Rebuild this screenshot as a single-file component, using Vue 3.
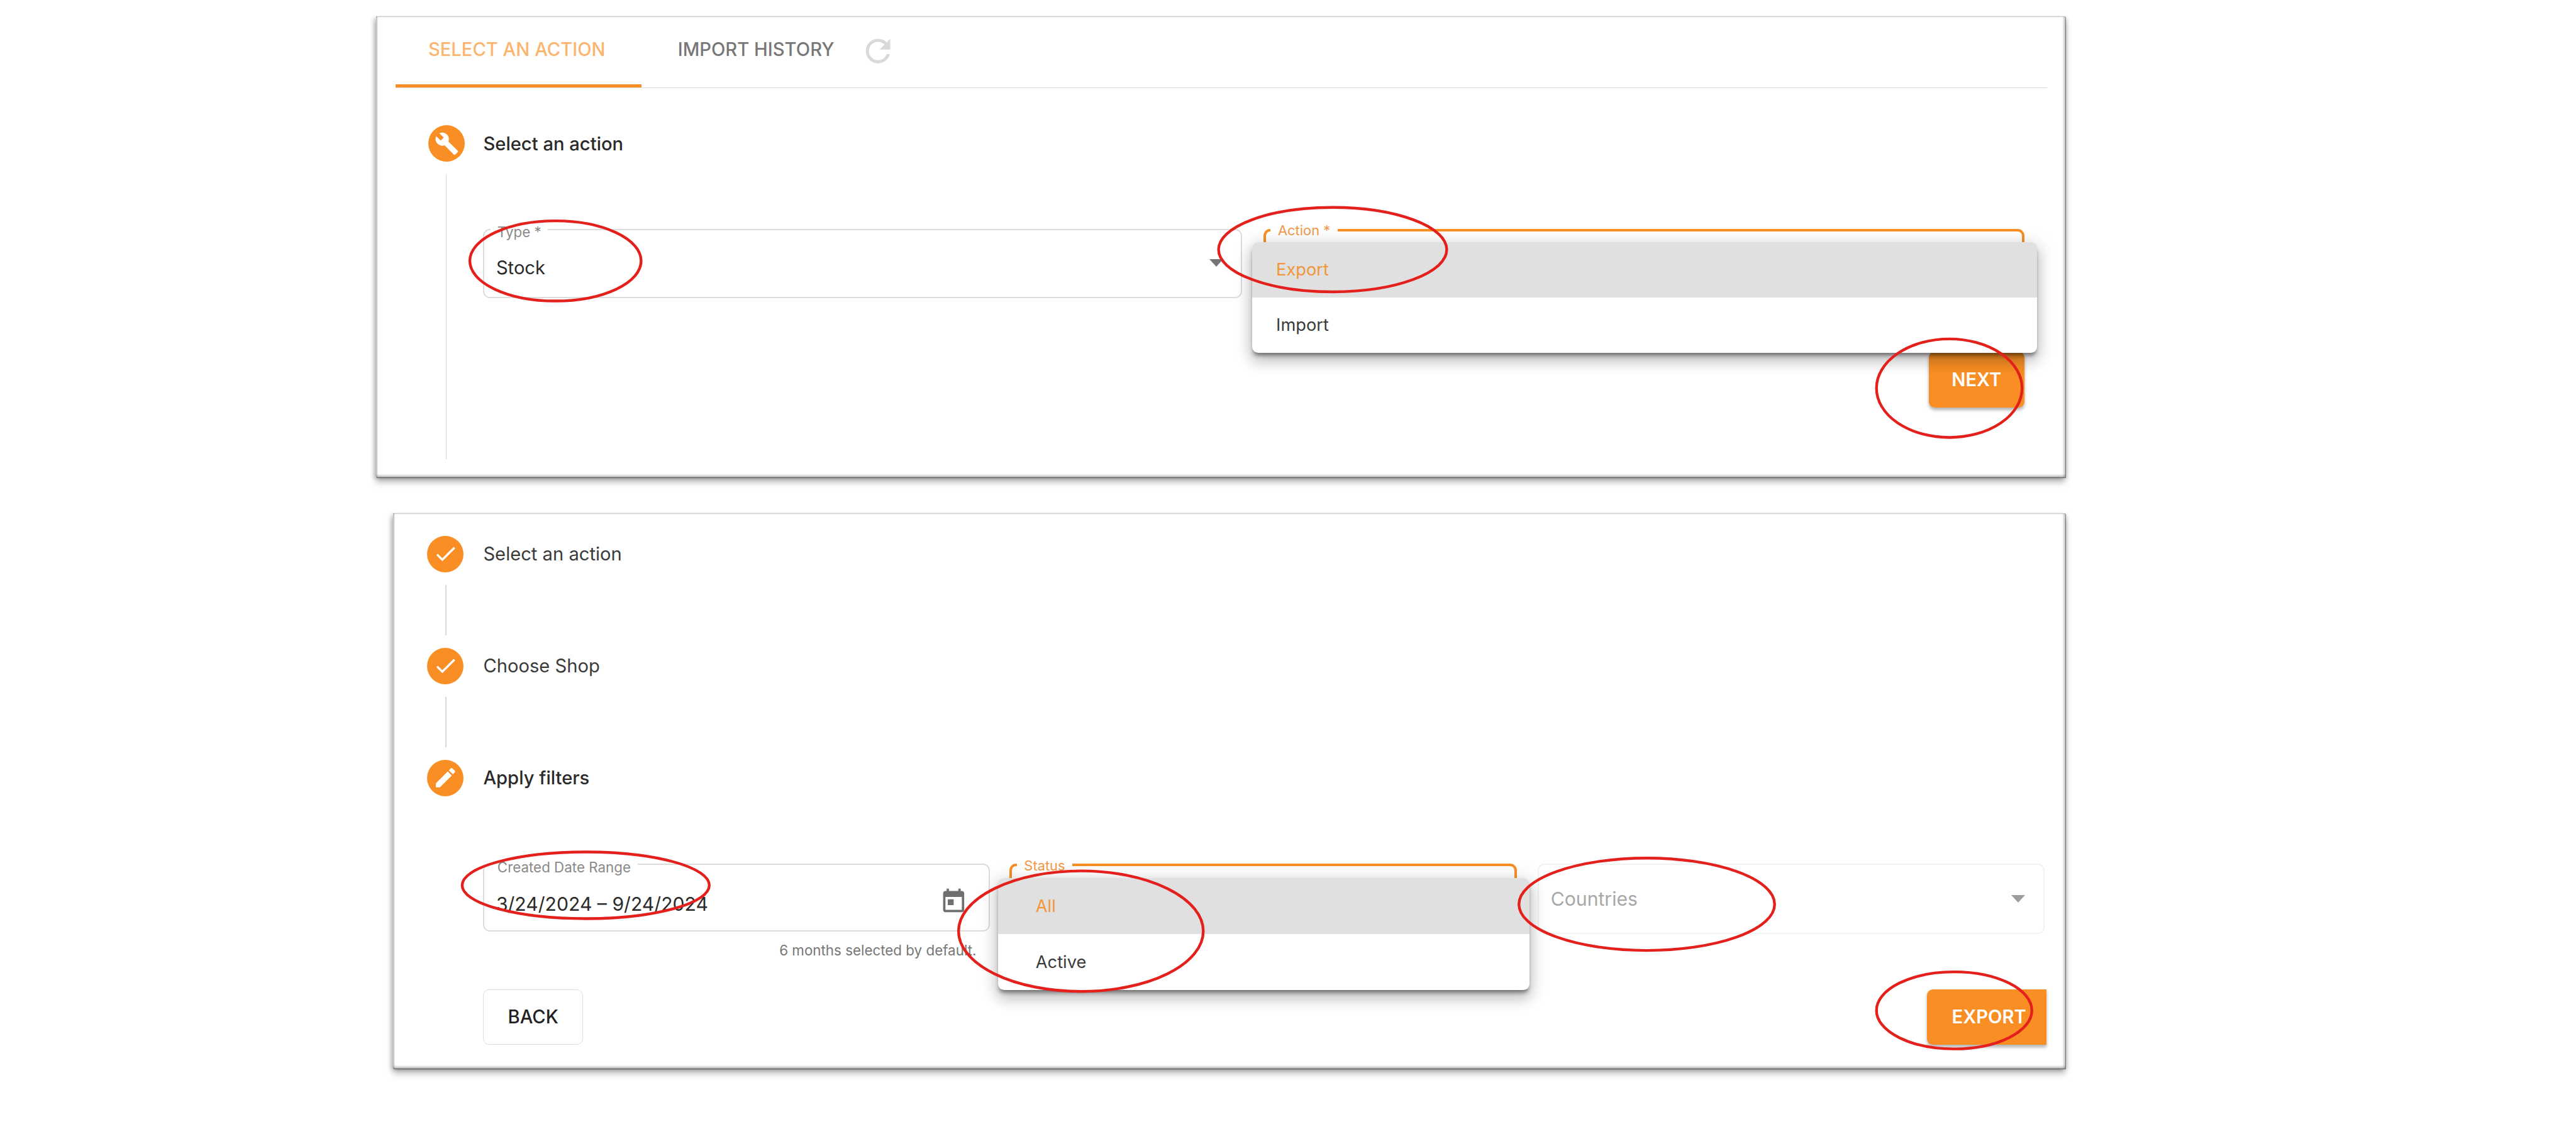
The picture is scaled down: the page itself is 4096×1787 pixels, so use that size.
<script setup>
const ellipses = [
  { cx: 908, cy: 426.5, rx: 140, ry: 65.5 },
  { cx: 2178.5, cy: 408, rx: 186.5, ry: 69 },
  { cx: 3186.5, cy: 634.5, rx: 119, ry: 80.5 },
  { cx: 957.5, cy: 1447, rx: 202, ry: 54.5 },
  { cx: 1767, cy: 1522, rx: 200, ry: 98.5 },
  { cx: 2692, cy: 1478, rx: 209, ry: 75.5 },
  { cx: 3194.5, cy: 1651.5, rx: 127, ry: 63 }
]
</script>

<template>
  <div class="page">
    <section class="card card-one">
      <nav class="tabs">
        <span class="tab active">SELECT AN ACTION</span>
        <span class="tab">IMPORT HISTORY</span>
        <svg class="refresh" viewBox="0 0 24 24"><path d="M17.65 6.35C16.2 4.9 14.21 4 12 4c-4.42 0-7.99 3.58-7.99 8s3.57 8 7.99 8c3.73 0 6.84-2.55 7.73-6h-2.08c-.82 2.33-3.04 4-5.65 4-3.31 0-6-2.69-6-6s2.69-6 6-6c1.66 0 3.14.69 4.22 1.78L13 11h7V4l-2.35 2.35z" /></svg>
      </nav>

      <div class="step-head first-head">
        <span class="dot">
          <svg class="wrench" viewBox="0 0 24 24"><path d="M22.7 19l-9.1-9.1c.9-2.3.4-5-1.5-6.9-2-2-5-2.4-7.4-1.3L9 6 6 9 1.6 4.7C.4 7.1.9 10.1 2.9 12.1c1.9 1.9 4.6 2.4 6.9 1.5l9.1 9.1c.4.4 1 .4 1.4 0l2.3-2.3c.5-.4.5-1.1.1-1.4z" /></svg>
        </span>
        <span class="step-label strong">Select an action</span>
      </div>

      <div class="step-body one-body">
        <div class="field-row">
          <div class="field">
            <span class="float-label">Type *</span>
            <span class="value stock">Stock</span>
            <span class="arrow"></span>
          </div>
          <div class="field focused">
            <span class="float-label">Action *</span>
            <ul class="menu">
              <li class="selected">Export</li>
              <li>Import</li>
            </ul>
          </div>
        </div>
        <div class="actions end">
          <button class="btn primary next">NEXT</button>
        </div>
      </div>
    </section>

    <section class="card card-two">
      <div class="step-head">
        <span class="dot">
          <svg viewBox="0 0 24 24"><path d="M9 16.2 4.8 12l-1.4 1.4L9 19 21 7l-1.4-1.4z" /></svg>
        </span>
        <span class="step-label">Select an action</span>
      </div>
      <div class="connector"></div>
      <div class="step-head">
        <span class="dot">
          <svg viewBox="0 0 24 24"><path d="M9 16.2 4.8 12l-1.4 1.4L9 19 21 7l-1.4-1.4z" /></svg>
        </span>
        <span class="step-label">Choose Shop</span>
      </div>
      <div class="connector"></div>
      <div class="step-head">
        <span class="dot">
          <svg viewBox="0 0 24 24"><path d="M3 17.25V21h3.75L17.81 9.94l-3.75-3.75L3 17.25zM20.71 7.04a.996.996 0 0 0 0-1.41l-2.34-2.34a.996.996 0 0 0-1.41 0l-1.83 1.83 3.75 3.75 1.83-1.83z" /></svg>
        </span>
        <span class="step-label strong">Apply filters</span>
      </div>

      <div class="filters">
        <div class="filter-date">
          <div class="field date">
            <span class="float-label">Created Date Range</span>
            <span class="value">3/24/2024 – 9/24/2024</span>
            <svg class="calendar" viewBox="0 0 24 24"><path d="M19 3h-1V1h-2v2H8V1H6v2H5c-1.11 0-1.99.9-1.99 2L3 19c0 1.1.89 2 2 2h14c1.1 0 2-.9 2-2V5c0-1.1-.9-2-2-2zm0 16H5V8h14v11zM7 10h5v5H7z" /></svg>
          </div>
          <p class="helper">6 months selected by default.</p>
        </div>
        <div class="field focused status">
          <span class="float-label">Status</span>
          <ul class="menu">
            <li class="selected">All</li>
            <li>Active</li>
          </ul>
        </div>
        <div class="field countries">
          <span class="value placeholder">Countries</span>
          <span class="arrow"></span>
        </div>
      </div>

      <div class="actions between">
        <button class="btn back">BACK</button>
        <button class="btn primary export">EXPORT</button>
      </div>
    </section>

    <svg class="marks" viewBox="0 0 4211 1837">
      <ellipse v-for="(e, i) in ellipses" :key="i" :cx="e.cx" :cy="e.cy" :rx="e.rx" :ry="e.ry" />
    </svg>
  </div>
</template>

<style>
html, body { margin: 0; background: #fff; }
</style>

<style scoped>
.page {
  zoom: 0.97269;
  position: relative;
  width: 4211px;
  height: 1837px;
  box-sizing: border-box;
  padding: 27px 835px 0 0;
  display: flex;
  flex-direction: column;
  align-items: flex-end;
  gap: 59px;
  background: #fff;
  overflow: hidden;
  font-family: Inter, "Liberation Sans", sans-serif;
  color: #2b2b2b;
}

.card {
  box-sizing: border-box;
  background: #fff;
  box-shadow:
    inset 0 -5px 4px -2px rgba(0, 0, 0, .26),
    inset 2px 0 2px rgba(0, 0, 0, .24),
    inset -3px 0 3px rgba(0, 0, 0, .2),
    inset 0 1px 1px rgba(0, 0, 0, .1),
    1px 1px 0 rgba(0, 0, 0, .42),
    0 8px 10px rgba(0, 0, 0, .26),
    -4px 2px 6px rgba(0, 0, 0, .16),
    3px 2px 5px rgba(0, 0, 0, .16);
}
.card-one { width: 2761px; height: 753px; padding: 0 30px 0 32px; }
.card-two { width: 2733px; height: 908px; padding: 36px 34px 0 55px; }

.tabs {
  display: flex;
  align-items: center;
  height: 116px;
  border-bottom: 2px solid #dcdcdc;
  font-size: 30px;
  font-weight: 500;
  color: #777;
}
.tab { box-sizing: border-box; height: 116px; line-height: 108px; padding: 0 53px; }
.tab.active { width: 402px; color: #fbb56e; border-bottom: 6px solid #f98f24; }
.tab + .tab { margin-left: 59px; padding: 0; }
.refresh { width: 60px; height: 60px; margin: -4px 0 0 42px; fill: #d9d9d9; }

.step-head { display: flex; align-items: center; gap: 32px; height: 61px; }
.first-head { margin: 60px 0 0 53px; gap: 30px; }
.dot {
  flex: none;
  width: 60px;
  height: 60px;
  border-radius: 50%;
  background: #f98f24;
  display: flex;
  align-items: center;
  justify-content: center;
}
.dot svg { width: 42px; height: 42px; fill: #fff; }
.dot .wrench { width: 40px; height: 40px; }
.step-label { font-size: 30px; color: #3a3a3a; }
.step-label.strong { font-weight: 500; color: #2a2a2a; }

.step-body {
  box-sizing: border-box;
  margin: 20px 0 0 82px;
  padding: 89px 37px 0 60px;
  height: 466px;
  border-left: 2px solid #d8d8d8;
}
.field-row { display: flex; gap: 35px; }
.field {
  position: relative;
  flex: 1;
  box-sizing: border-box;
  height: 113px;
  border: 2.5px solid #dcdcdc;
  border-radius: 11px;
  display: flex;
  align-items: center;
  padding: 14px 19px 0;
}
.field.focused { border: 5px solid #f98f24; border-bottom-color: transparent; }
.float-label {
  position: absolute;
  top: -11px;
  left: 10px;
  padding: 0 11px;
  background: #fff;
  font-size: 23px;
  line-height: 28px;
  color: #8a8a8a;
}
.focused .float-label { color: #f2994a; top: -15px; left: 8px; font-size: 22.5px; padding: 0 12px; }
.value { font-size: 31px; color: #2b2b2b; }
.stock { font-size: 30px; }
.placeholder { color: #a8a8a8; }
.arrow {
  position: absolute;
  right: 28px;
  top: 48px;
  width: 0;
  height: 0;
  border-left: 12px solid transparent;
  border-right: 12px solid transparent;
  border-top: 13px solid #757575;
}

.menu {
  position: absolute;
  z-index: 2;
  top: 18px;
  left: -22px;
  right: -25px;
  margin: 0;
  padding: 0;
  list-style: none;
  background: #fff;
  border-radius: 10px;
  overflow: hidden;
  font-size: 28px;
  color: #3a3a3a;
  box-shadow: 0 7px 7px -3px rgba(0, 0, 0, .45), 0 14px 22px 2px rgba(0, 0, 0, .16), 0 4px 30px 4px rgba(0, 0, 0, .12);
}
.menu li { height: 90.5px; line-height: 90.5px; padding-left: 39px; }
.menu li.selected { background: #e0e0e0; color: #f2963a; }

.actions { display: flex; }
.actions.end { justify-content: flex-end; margin-top: 88px; }
.btn {
  box-sizing: border-box;
  height: 91px;
  font-family: inherit;
  font-size: 30px;
  font-weight: 600;
  border: 0;
}
.primary { background: #f98f24; color: #fff; box-shadow: 0 4px 5px rgba(0, 0, 0, .3); }
.next { width: 156px; border-radius: 10px; }
.export { width: 195px; margin-right: -3px; padding: 0 0 0 8px; border-radius: 10px 0 0 10px; }
.back {
  width: 163px;
  background: #fff;
  color: #222;
  font-weight: 500;
  border: 2px solid #dedede;
  border-radius: 10px;
}

.connector { height: 82px; width: 2px; background: #d8d8d8; margin: 20px 0 20px 30px; }

.filters { display: flex; align-items: flex-start; margin: 110px 0 0 92px; }
.filter-date { width: 828px; flex: none; }
.helper { margin: 16px 22px 0 0; text-align: right; font-size: 23px; line-height: 28px; color: #777; }
.date { flex: none; height: 111px; padding: 20px 19px 0; }
.calendar { position: absolute; right: 34px; top: 37px; width: 46px; height: 46px; fill: #6f6f6f; }
.status { flex: none; width: 830px; margin-left: 32px; height: 111px; }
.status .menu { top: 19px; left: -23px; right: -24px; }
.status .menu li { height: 91.5px; line-height: 91.5px; padding-left: 62px; }
.countries { flex: none; width: 828px; margin-left: 34px; height: 115px; border-color: #f2f2f2; padding: 0 19px; align-items: flex-start; }
.countries .value { margin-top: 37px; }
.countries .arrow { right: 29px; top: 49px; border-top-color: #9c9c9c; }

.between { justify-content: space-between; margin: 50px 0 0 92px; }

.marks {
  position: absolute;
  inset: 0;
  width: 4211px;
  height: 1837px;
  z-index: 5;
  pointer-events: none;
}
.marks ellipse { fill: none; stroke: #e3201b; stroke-width: 4.5; }
</style>
